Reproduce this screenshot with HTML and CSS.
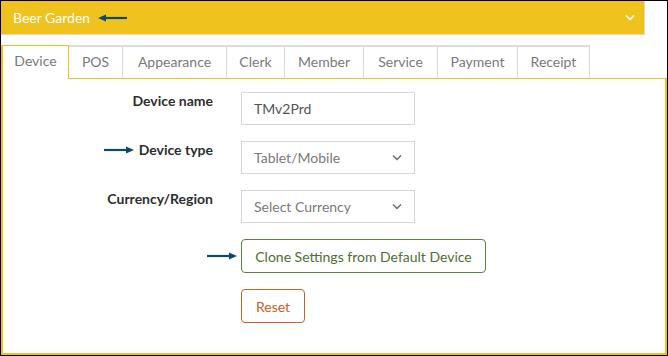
FILE: index.html
```html
<!DOCTYPE html>
<html>
<head>
<meta charset="utf-8">
<link rel="stylesheet" href="styles.css">
</head>
<body>
<div class="frame">
  <div class="header">
    <div class="header-title">
      <span>Beer Garden</span>
      <svg class="arrow" width="30" height="8" viewBox="0 0 30 8"><path d="M6 4H29" stroke="#0d4a66" stroke-width="2.2"/><path d="M0 4L8 0.5V7.5Z" fill="#0d4a66"/></svg>
    </div>
    <svg class="chev" width="10" height="7" viewBox="0 0 10 7"><path d="M1 1.5L5 5.5L9 1.5" fill="none" stroke="#fff" stroke-width="1.6"/></svg>
  </div>
  <div class="tabs">
    <div class="tab active">Device</div>
    <div class="tab">POS</div>
    <div class="tab">Appearance</div>
    <div class="tab">Clerk</div>
    <div class="tab">Member</div>
    <div class="tab">Service</div>
    <div class="tab">Payment</div>
    <div class="tab">Receipt</div>
  </div>
  <div class="panel">
    <div class="row">
      <div class="label">Device name</div>
      <div class="field">TMv2Prd</div>
    </div>
    <div class="row">
      <div class="label"><svg class="arrow-r" width="30" height="8" viewBox="0 0 30 8"><path d="M0 4H23" stroke="#0d4a66" stroke-width="2.2"/><path d="M30 4L22 0.5V7.5Z" fill="#0d4a66"/></svg>Device type</div>
      <div class="field select"><span>Tablet/Mobile</span><svg width="10" height="7" viewBox="0 0 10 7"><path d="M1 1.5L5 5.5L9 1.5" fill="none" stroke="#666" stroke-width="1.3"/></svg></div>
    </div>
    <div class="row">
      <div class="label">Currency/Region</div>
      <div class="field select"><span>Select Currency</span><svg width="10" height="7" viewBox="0 0 10 7"><path d="M1 1.5L5 5.5L9 1.5" fill="none" stroke="#666" stroke-width="1.3"/></svg></div>
    </div>
    <div class="row btn-row">
      <div class="label"><svg class="arrow-r btn-arrow" width="30" height="8" viewBox="0 0 30 8"><path d="M0 4H23" stroke="#0d4a66" stroke-width="2.2"/><path d="M30 4L22 0.5V7.5Z" fill="#0d4a66"/></svg></div>
      <button class="btn clone">Clone Settings from Default Device</button>
    </div>
    <div class="row btn-row">
      <div class="label"></div>
      <button class="btn reset">Reset</button>
    </div>
  </div>
</div>
</body>
</html>
```
FILE: styles.css
```css
* { box-sizing: border-box; }
html, body { margin: 0; padding: 0; background: #fff; }
body { font-family: Lato, "Noto Sans", sans-serif; }
.frame {
  width: 668px;
  height: 356px;
  border: 1px solid #000;
  display: flex;
  flex-direction: column;
  overflow: hidden;
}
.header {
  width: 644px;
  height: 34px;
  background: #f0c21e;
  border-right: 1px solid #d8d8d8;
  border-bottom: 1px solid #d8d8d8;
  display: flex;
  align-items: center;
  justify-content: space-between;
  padding: 0 9px 0 12px;
  flex: none;
}
.header-title {
  display: flex;
  align-items: center;
  gap: 8px;
  color: #fff;
  font-size: 14px;
}
.tabs {
  margin-top: 10px;
  display: flex;
  height: 33px;
  flex: none;
}
.tab {
  height: 33px;
  border-top: 2px solid #dcdcdc;
  border-right: 1px solid #dcdcdc;
  color: #7a7a7a;
  font-size: 14px;
  display: flex;
  align-items: center;
  justify-content: center;
  padding: 0 10px 3px;
  background: #fff;
  position: relative;
  z-index: 1;
  white-space: nowrap;
}
.tab:nth-child(1) { width: 68px; }
.tab:nth-child(2) { width: 54px; }
.tab:nth-child(3) { width: 104px; }
.tab:nth-child(4) { width: 58px; }
.tab:nth-child(5) { width: 79px; }
.tab:nth-child(6) { width: 74px; }
.tab:nth-child(7) { width: 80px; }
.tab:nth-child(8) { width: 72px; }
.tab.active {
  border: 1px solid #f0c21e;
  border-left-width: 2px;
  border-bottom: none;
  height: 34px;
  margin-bottom: -1px;
  padding-bottom: 4px;
}
.panel {
  flex: 1;
  border: 2px solid #f0c21e;
  border-top-width: 1px;
  padding-top: 13px;
  display: flex;
  flex-direction: column;
  gap: 16px;
}
.row {
  display: flex;
  align-items: flex-start;
  gap: 28px;
}
.label {
  width: 210px;
  flex: none;
  text-align: right;
  font-size: 14px;
  font-weight: bold;
  color: #2e2e2e;
  display: flex;
  justify-content: flex-end;
  align-items: center;
  gap: 5px;
  white-space: nowrap;
}
.field {
  width: 174px;
  height: 33px;
  border: 1px solid #d6d6d6;
  font-size: 14px;
  color: #555;
  padding: 0 12px;
  display: flex;
  align-items: center;
  justify-content: space-between;
}
.select { color: #7a7a7a; }
.btn-row .label { height: 34px; }
.btn-arrow { margin-right: -24px; flex: none; }
.btn {
  font-family: inherit;
  font-size: 14px;
  background: #fff;
  height: 34px;
  border-radius: 4px;
  padding: 0;
  cursor: pointer;
  white-space: nowrap;
  text-align: center;
  flex: none;
}
.clone {
  width: 245px;
  border: 1px solid #5f7f3f;
  color: #4e6e32;
}
.reset {
  width: 64px;
  border: 1px solid #c8602a;
  color: #c8602a;
}
```
